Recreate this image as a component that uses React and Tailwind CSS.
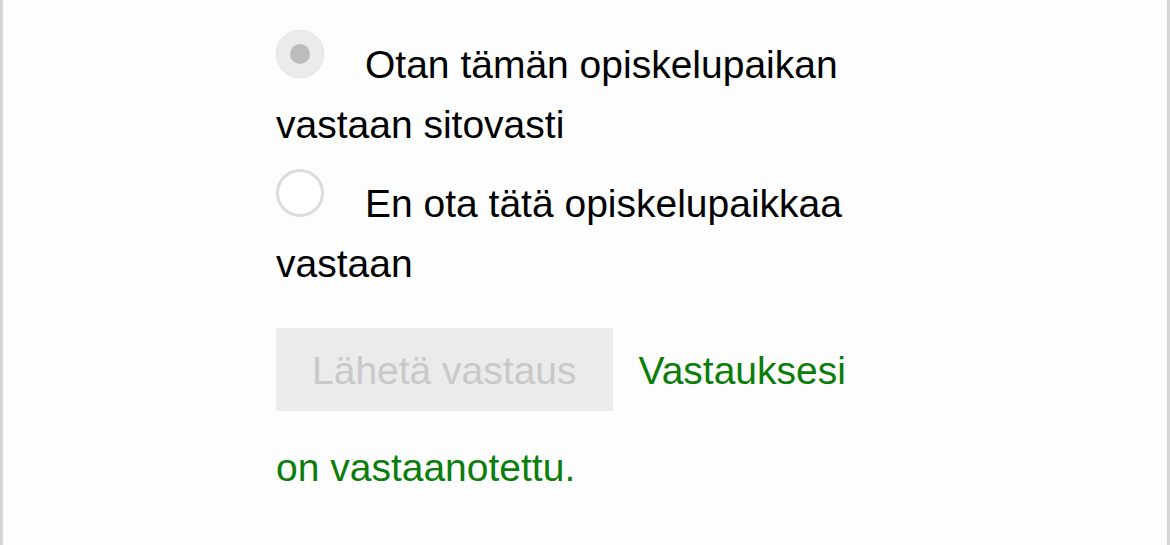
export default function App() {
  return (
    <div className="w-[1170px] min-h-[545px] bg-[#fdfdfd] border-x-[3px] border-[#d6d6d6] font-['Liberation_Sans',Arial,sans-serif] text-[39px] leading-[60px] text-black">
      <div className="w-[618px] mx-auto pt-[30px]">
        <p>
          <span className="inline-block align-baseline w-12 h-12 rounded-full bg-[#bcbcbc] shadow-[inset_0_0_0_14px_#ebebeb] mr-[41px]"></span>
          Otan tämän opiskelupaikan vastaan sitovasti
        </p>
        <p className="mt-[14px]">
          <span className="inline-block align-baseline w-12 h-12 rounded-full bg-white border-[3px] border-[#dcdcdc] mr-[41px]"></span>
          En ota tätä opiskelupaikkaa vastaan
        </p>
        <p className="mt-[34px]">
          <button
            disabled
            className="inline-block align-baseline bg-[#ebebeb] text-[#c9c9c9] text-[39px] leading-[60px] pt-[13px] pb-[10px] px-[36px] mr-[26px] mb-[27px] font-['Liberation_Sans',Arial,sans-serif]"
          >
            Lähetä vastaus
          </button>
          <span className="text-[#0b7d0b]">Vastauksesi on vastaanotettu.</span>
        </p>
      </div>
    </div>
  );
}
